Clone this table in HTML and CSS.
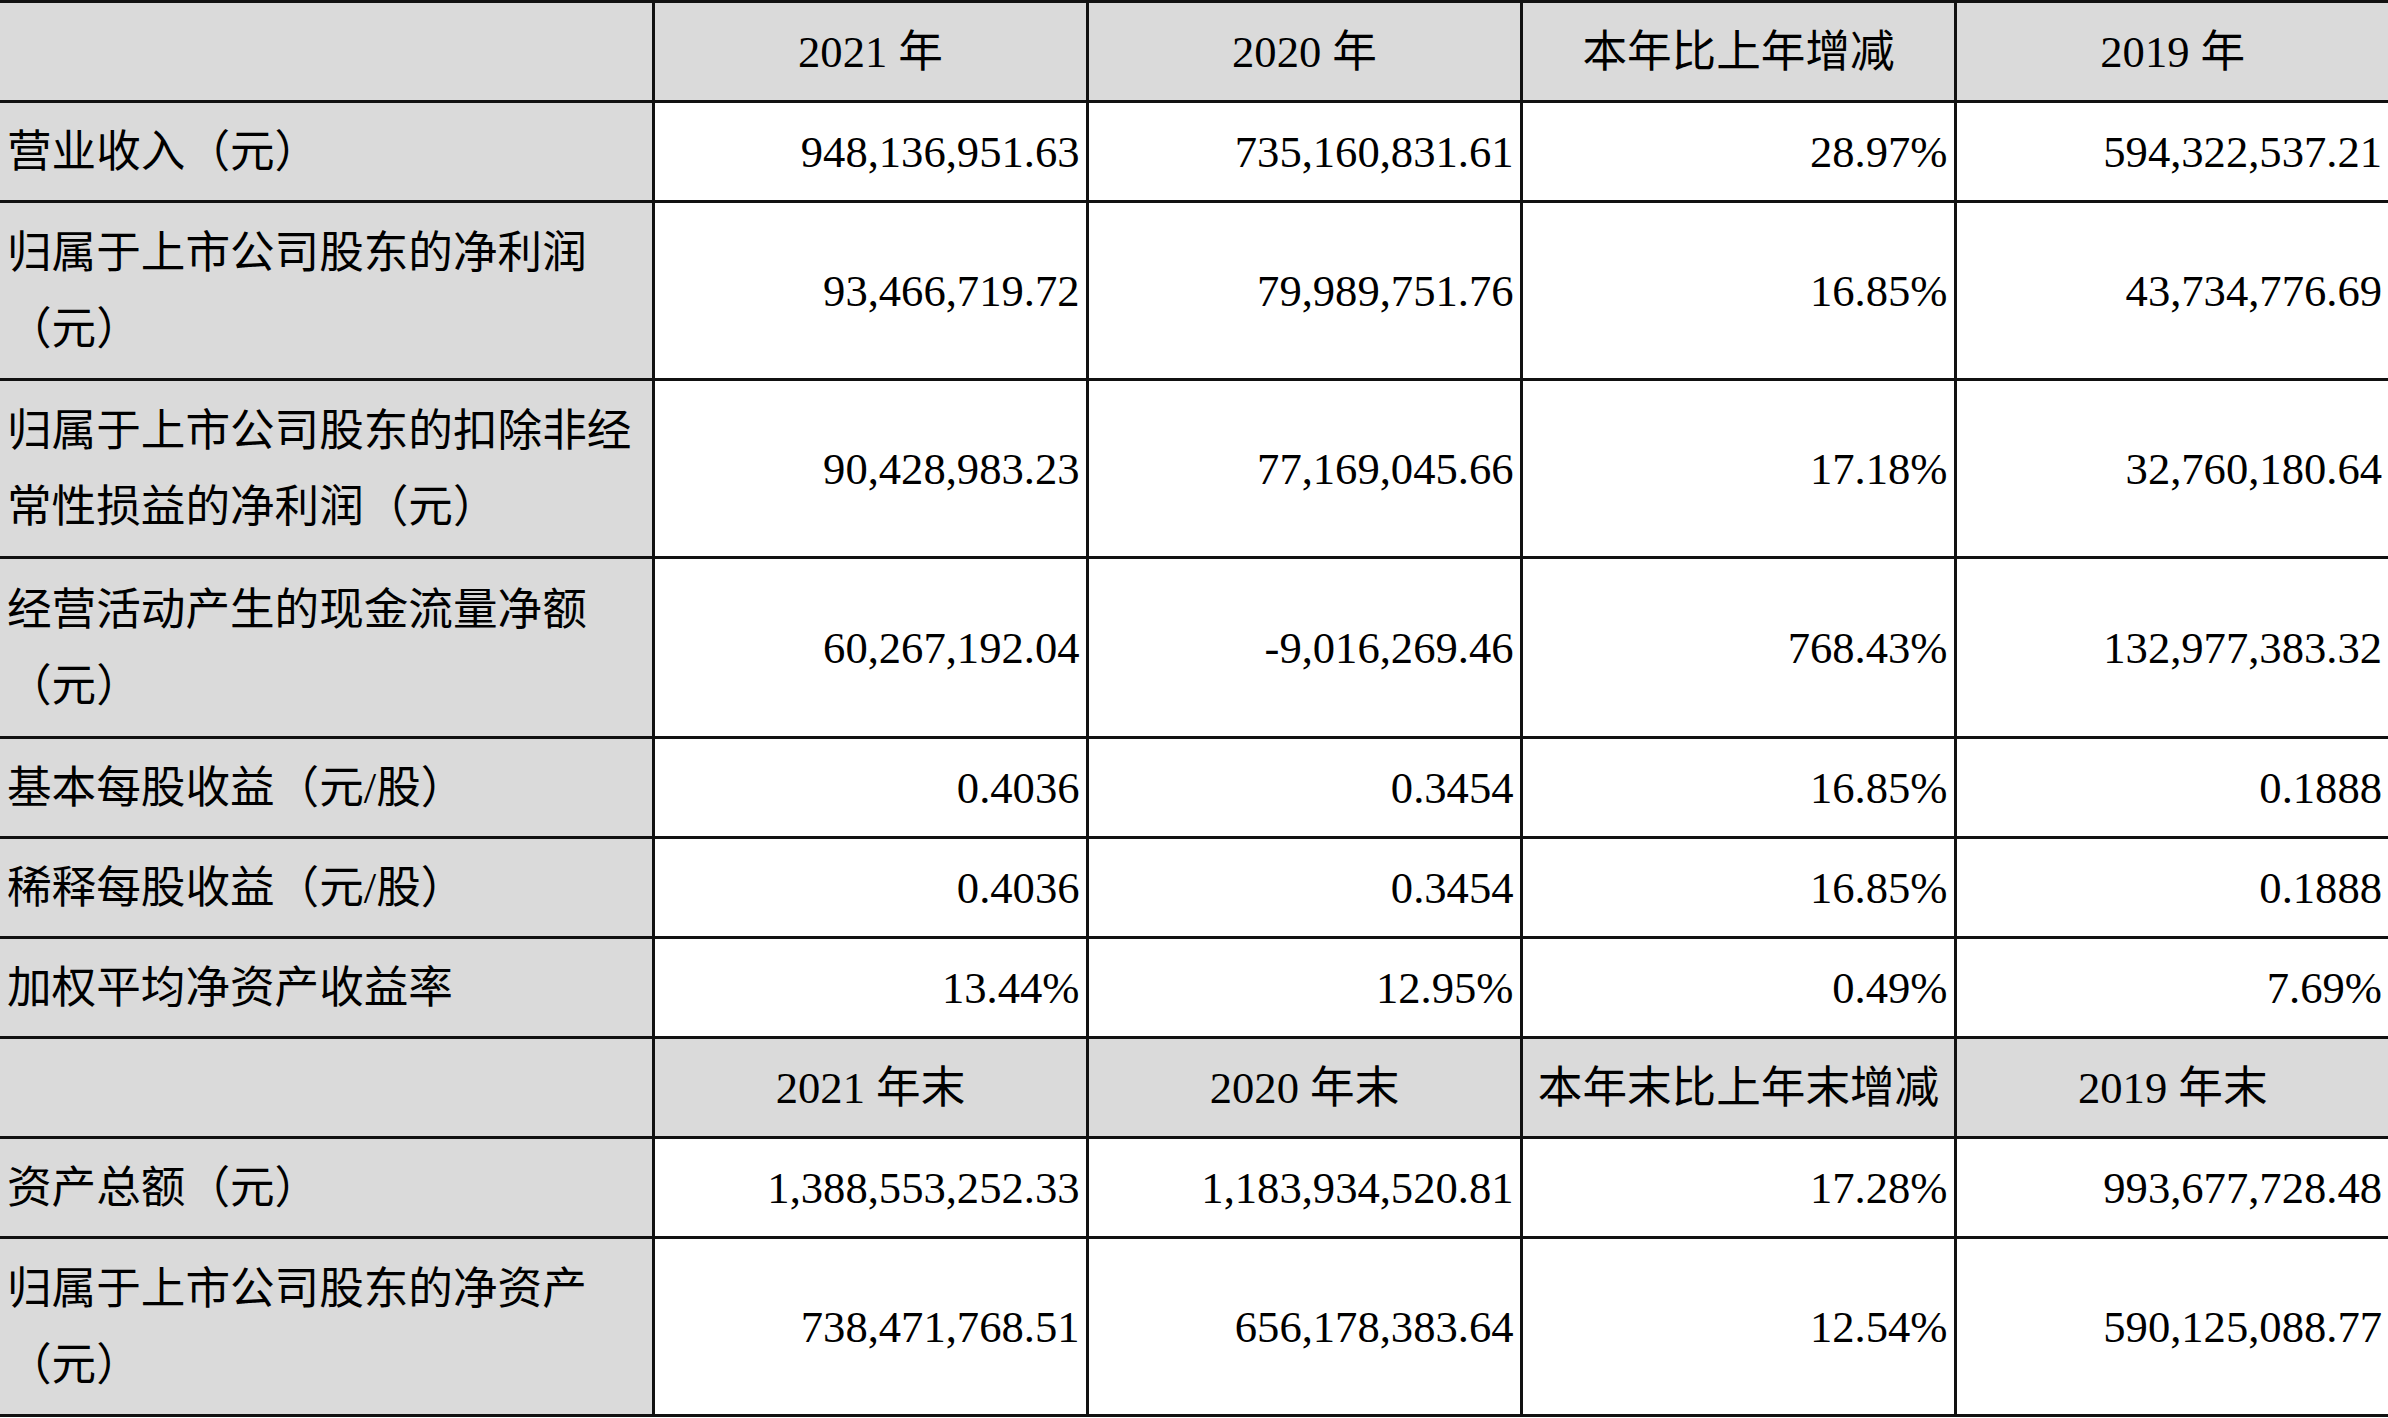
FILE: index.html
```html
<!DOCTYPE html>
<html lang="zh-CN">
<head>
<meta charset="utf-8">
<title>主要会计数据</title>
<link rel="stylesheet" href="styles.css">
</head>
<body>
<table class="fin">
  <colgroup>
    <col class="c-label">
    <col class="c-num">
    <col class="c-num">
    <col class="c-num">
    <col class="c-last">
  </colgroup>
  <tbody>
    <tr class="row-1 head">
      <td class="label"></td>
      <td class="h">2021 年</td>
      <td class="h">2020 年</td>
      <td class="h">本年比上年增减</td>
      <td class="h">2019 年</td>
    </tr>
    <tr class="row-1 first-data">
      <td class="label">营业收入（元）</td>
      <td class="num">948,136,951.63</td>
      <td class="num">735,160,831.61</td>
      <td class="num">28.97%</td>
      <td class="num">594,322,537.21</td>
    </tr>
    <tr class="row-2">
      <td class="label">归属于上市公司股东的净利润<br>（元）</td>
      <td class="num">93,466,719.72</td>
      <td class="num">79,989,751.76</td>
      <td class="num">16.85%</td>
      <td class="num">43,734,776.69</td>
    </tr>
    <tr class="row-2">
      <td class="label">归属于上市公司股东的扣除非经<br>常性损益的净利润（元）</td>
      <td class="num">90,428,983.23</td>
      <td class="num">77,169,045.66</td>
      <td class="num">17.18%</td>
      <td class="num">32,760,180.64</td>
    </tr>
    <tr class="row-2 tall">
      <td class="label">经营活动产生的现金流量净额<br>（元）</td>
      <td class="num">60,267,192.04</td>
      <td class="num">-9,016,269.46</td>
      <td class="num">768.43%</td>
      <td class="num">132,977,383.32</td>
    </tr>
    <tr class="row-1">
      <td class="label">基本每股收益（元/股）</td>
      <td class="num">0.4036</td>
      <td class="num">0.3454</td>
      <td class="num">16.85%</td>
      <td class="num">0.1888</td>
    </tr>
    <tr class="row-1">
      <td class="label">稀释每股收益（元/股）</td>
      <td class="num">0.4036</td>
      <td class="num">0.3454</td>
      <td class="num">16.85%</td>
      <td class="num">0.1888</td>
    </tr>
    <tr class="row-1">
      <td class="label">加权平均净资产收益率</td>
      <td class="num">13.44%</td>
      <td class="num">12.95%</td>
      <td class="num">0.49%</td>
      <td class="num">7.69%</td>
    </tr>
    <tr class="row-1 head">
      <td class="label"></td>
      <td class="h">2021 年末</td>
      <td class="h">2020 年末</td>
      <td class="h">本年末比上年末增减</td>
      <td class="h">2019 年末</td>
    </tr>
    <tr class="row-1">
      <td class="label">资产总额（元）</td>
      <td class="num">1,388,553,252.33</td>
      <td class="num">1,183,934,520.81</td>
      <td class="num">17.28%</td>
      <td class="num">993,677,728.48</td>
    </tr>
    <tr class="row-2">
      <td class="label">归属于上市公司股东的净资产<br>（元）</td>
      <td class="num">738,471,768.51</td>
      <td class="num">656,178,383.64</td>
      <td class="num">12.54%</td>
      <td class="num">590,125,088.77</td>
    </tr>
  </tbody>
</table>
</body>
</html>
```

FILE: styles.css
```css
html, body {
  margin: 0;
  padding: 0;
  background: #ffffff;
}

body {
  font-family: "Liberation Serif", "Noto Sans CJK SC", serif;
  color: #000000;
}

.fin {
  width: 2388px;
  table-layout: fixed;
  border-collapse: collapse;
  border-top: 2px solid #000;
  border-bottom: 3px solid #000;
  font-size: 44.6px;
}

.c-label { width: 653px; }
.c-num { width: 434px; }
.c-last { width: 433px; }

.fin td {
  border-top: 3px solid #111;
  border-bottom: 3px solid #111;
  border-left: 3px solid #111;
  border-right: 3px solid #111;
  padding: 0 6px 0 7px;
  vertical-align: middle;
  white-space: nowrap;
  line-height: 76px;
}

.fin td:first-child { border-left: none; }
.fin td:last-child { border-right: none; }

.row-1 { height: 100px; }
.row-2 { height: 178px; }
.row-2.tall { height: 180px; }

.label {
  background: #dadada;
  text-align: left;
  padding-left: 5px;
}

.head td {
  background: #dadada;
}

.h {
  text-align: center;
}

.num {
  text-align: right;
  padding-right: 5px;
}
```
